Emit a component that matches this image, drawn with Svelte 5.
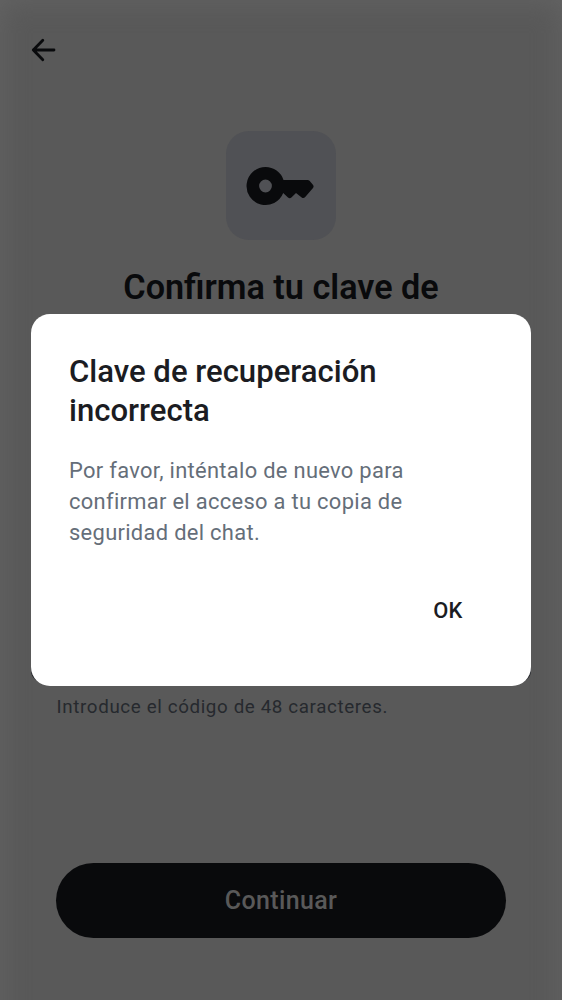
<script>
  const titleLines = ['Clave de recuperación', 'incorrecta'];
  const bodyLines = ['Por favor, inténtalo de nuevo para', 'confirmar el acceso a tu copia de', 'seguridad del chat.'];
</script>

<div class="screen">
  <main class="page">
    <header>
      <svg class="back" width="26" height="24" viewBox="0 0 26 24" aria-label="Atrás">
        <path d="M11.8 2.2 2.3 12 11.8 21.8M2.3 12H23" />
      </svg>
    </header>
    <div class="tile">
      <svg width="70" height="40" viewBox="0 0 70 40" aria-hidden="true">
        <path fill-rule="evenodd" d="M19.5 1A19 19 0 1 0 37.2 27L42 31.4Q43.7 32.9 45.4 31.4L50 27 55.7 31.5Q57.4 32.7 59 31.3L67 22Q68.3 20.2 66.7 18.4L63.5 14.7Q62.7 14 61.5 14H37.5A19 19 0 0 0 19.5 1ZM19.5 13.6A6.4 6.4 0 1 1 19.5 26.4A6.4 6.4 0 0 1 19.5 13.6Z" />
      </svg>
    </div>
    <h1>Confirma tu clave de</h1>
    <div class="field"></div>
    <p class="hint">Introduce el código de 48 caracteres.</p>
    <button class="continue">Continuar</button>
  </main>

  <div class="overlay">
    <section class="dialog" role="dialog">
      <h2>{#each titleLines as line}<span>{line}</span>{/each}</h2>
      <p class="message">{#each bodyLines as line}<span>{line}</span>{/each}</p>
      <button class="ok">OK</button>
    </section>
  </div>
</div>

<style>
  :global(body) { margin: 0; }
  .screen {
    position: relative;
    width: 562px;
    height: 1000px;
    overflow: hidden;
    font-family: Roboto, sans-serif;
    background: #595959;
  }
  .screen::before {
    content: '';
    position: absolute;
    inset: 0 0 -40px;
    box-shadow: inset 0 0 28px 0 #646464;
  }
  .page {
    position: relative;
    box-sizing: border-box;
    height: 100%;
    padding: 38px 31px 62.5px;
    display: flex;
    flex-direction: column;
    align-items: center;
  }
  header { width: 100%; height: 93px; flex: none; }
  .back { display: block; fill: none; stroke: #090a0c; stroke-width: 2.8; stroke-linecap: round; stroke-linejoin: round; }
  .tile {
    width: 109.4px;
    height: 109.4px;
    flex: none;
    display: flex;
    align-items: center;
    justify-content: center;
    border-radius: 23px;
    background: #505155;
  }
  .tile svg { fill: #090a0c; }
  h1 {
    margin: 24.6px 0 0;
    font-size: 34.2px;
    line-height: 44px;
    font-weight: 600;
    color: #090a0c;
    white-space: nowrap;
  }
  .field {
    box-sizing: border-box;
    width: 500px;
    height: 83px;
    margin-top: 290px;
    flex: none;
    border-radius: 11px;
    background: #26282d;
  }
  .hint {
    align-self: flex-start;
    margin: 13px 0 0 25.6px;
    font-size: 18.75px;
    line-height: 25px;
    letter-spacing: 0.63px;
    color: #26292e;
    white-space: nowrap;
  }
  button { border: 0; padding: 0; font-family: inherit; font-weight: 500; }
  .continue {
    width: 450px;
    height: 75px;
    margin-top: auto;
    flex: none;
    border-radius: 38px;
    background: #090a0c;
    color: #595959;
    font-size: 25px;
    letter-spacing: 0.36px;
  }
  .overlay { position: absolute; inset: 314px 31px; }
  .dialog {
    box-sizing: border-box;
    height: 372px;
    padding: 38px;
    display: flex;
    flex-direction: column;
    border-radius: 19px;
    background: #fff;
  }
  .dialog span { display: block; white-space: nowrap; }
  h2 { margin: 0; font-size: 31.1px; line-height: 39px; font-weight: 500; color: #1b1c22; }
  .message { margin: 24.5px 0 0; font-size: 21.9px; line-height: 31.25px; letter-spacing: 0.31px; color: #656e79; }
  .ok {
    align-self: flex-end;
    width: 78px;
    height: 50px;
    margin-top: 37.5px;
    margin-right: 6px;
    background: transparent;
    color: #1b1c22;
    font-size: 21.9px;
    letter-spacing: 0.3px;
  }
</style>
